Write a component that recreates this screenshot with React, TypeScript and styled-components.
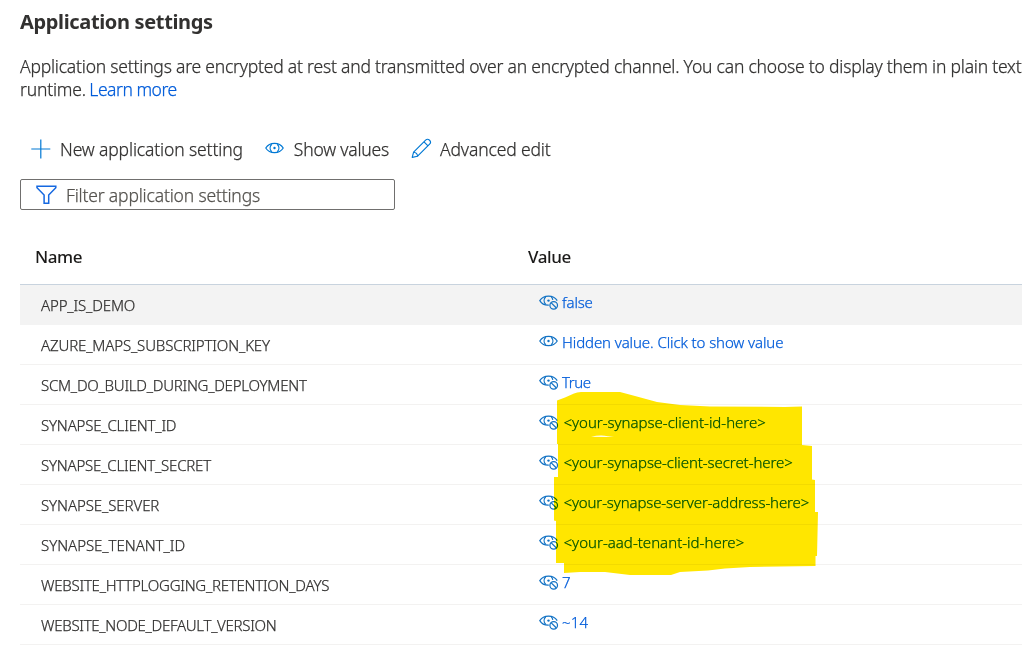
import React from "react";
import styled, { createGlobalStyle } from "styled-components";

const GlobalStyle = createGlobalStyle`
  * { box-sizing: border-box; }
  body {
    margin: 0;
    overflow: hidden;
    background: #fff;
    color: #323130;
    font-family: "Noto Sans", "Open Sans", sans-serif;
    font-weight: 300;
    -webkit-text-stroke: 0.25px currentColor;
  }
`;

const Page = styled.main`
  width: 1022px;
  height: 665px;
  padding: 8px 0 0 20px;
  overflow: hidden;
`;

const Title = styled.h1`
  margin: 0 0 19px;
  font-size: 20px;
  line-height: 28px;
  font-weight: 700;
  letter-spacing: -0.35px;
  -webkit-text-stroke-width: 0;
`;

const Description = styled.p`
  margin: 0;
  height: 46px;
  font-size: 17.5px;
  line-height: 23px;
  letter-spacing: -0.207px;
  white-space: nowrap;
`;

const Link = styled.a`
  margin-left: -0.7px;
  color: #015cda;
  letter-spacing: -0.48px;
`;

const Toolbar = styled.div`
  display: flex;
  align-items: center;
  height: 31px;
  margin: 32px 0 15px;
`;

const Command = styled.button<{ $offset: number; $gap: number; $spacing: number }>`
  display: flex;
  align-items: center;
  gap: ${(p) => p.$gap}px;
  height: 31px;
  margin: 0 0 0 ${(p) => p.$offset}px;
  padding: 0;
  border: 0;
  background: none;
  color: inherit;
  font: inherit;
  font-size: 17.5px;
  letter-spacing: ${(p) => p.$spacing}px;
  white-space: nowrap;
  svg { flex: none; }
`;

const FilterBox = styled.label`
  display: flex;
  align-items: center;
  gap: 9px;
  width: 375px;
  height: 31px;
  padding-left: 15px;
  border: 1px solid #706f6e;
  border-radius: 2px;
  color: #55534f;
  font-size: 17.5px;
  letter-spacing: -0.17px;
`;

const Table = styled.section`
  position: relative;
  margin-top: 19px;
`;

const HeaderRow = styled.div`
  display: grid;
  grid-template-columns: 493px 1fr;
  align-items: center;
  height: 56px;
  padding-left: 15px;
  border-bottom: 1px solid #c8d3de;
  color: #1b1a19;
  font-size: 17px;
  font-weight: 500;
  letter-spacing: -0.4px;
  -webkit-text-stroke-width: 0;
`;

const Row = styled.div<{ $active?: boolean }>`
  display: grid;
  grid-template-columns: 498px 1fr;
  height: 40px;
  padding-left: 21px;
  border-bottom: 1px solid ${(p) => (p.$active ? "#f3f3f3" : "#f3f2f1")};
  background: ${(p) => (p.$active ? "#f3f3f3" : "#fff")};
  font-size: 15px;
`;

const Name = styled.div<{ $spacing: number }>`
  line-height: 41px;
  letter-spacing: ${(p) => p.$spacing}px;
`;

const Value = styled.div<{ $spacing: number; $indent?: boolean }>`
  display: flex;
  gap: ${(p) => (p.$indent ? 4.5 : 3)}px;
  color: #015cda;
  line-height: 35px;
  letter-spacing: ${(p) => p.$spacing}px;
  svg { flex: none; margin-top: 9px; }
`;

const Highlight = styled.svg`
  position: absolute;
  left: 530px;
  top: 161px;
  mix-blend-mode: multiply;
  pointer-events: none;
`;

const PlusIcon = () => (
  <svg width="20" height="20" viewBox="0 0 20 20" fill="none" stroke="#0078d4" strokeWidth="1.2">
    <path d="M9.8 .5v19M.3 10h19" />
  </svg>
);

const EyeIcon = () => (
  <svg width="20" height="19" viewBox="0 0 20 19" fill="none" stroke="#1272c4" strokeWidth="1.25">
    <path d="M.8 7C4.6 .8 14.4 .8 18.2 7C14.4 13.2 4.6 13.2 .8 7Z" />
    <path d="M6.7 3.2C4.6 5.4 4.6 8.6 6.7 10.8M12.3 3.2C14.4 5.4 14.4 8.6 12.3 10.8" />
    <circle cx="9.5" cy="7" r="1.2" fill="#1272c4" stroke="none" />
  </svg>
);

const ToolbarEyeIcon = () => (
  <svg width="20" height="19" viewBox="0 0 20 19" fill="none" stroke="#0078d4" strokeWidth="1.25">
    <path d="M.8 9C4.6 2.8 14.4 2.8 18.2 9C14.4 15.2 4.6 15.2 .8 9Z" />
    <path d="M6.7 5.2C4.6 7.4 4.6 10.6 6.7 12.8M12.3 5.2C14.4 7.4 14.4 10.6 12.3 12.8" />
    <circle cx="9.5" cy="9" r="1.2" fill="#0078d4" stroke="none" />
  </svg>
);

const EyeOffIcon = () => (
  <svg width="20" height="19" viewBox="0 0 20 19" fill="none" stroke="#1272c4" strokeWidth="1.25">
    <path d="M9.8 11.2C6.2 11.4 2.7 9.8 .8 6.6C4.6 .6 14.4 .6 18.2 6.6" />
    <path d="M6.7 2.8C4.6 5 4.6 8.2 6.7 10.4M12.3 2.8C13.2 3.8 13.7 4.8 13.8 5.9" />
    <circle cx="9.5" cy="6.6" r="1.2" fill="#1272c4" stroke="none" />
    <circle cx="14.7" cy="11.3" r="3.8" />
    <path d="M12 8.6l5.4 5.4" />
  </svg>
);

const PencilIcon = () => (
  <svg width="21" height="21" viewBox="0 0 21 21" fill="none" stroke="#0078d4" strokeWidth="1.15" strokeLinejoin="round">
    <path d="M1.2 19.4L2.6 14.2L14.6 2.2C17.2 -.4 21.2 3.6 18.6 6.2L6.6 18.2Z" />
    <path d="M2.6 14.2C4.8 14.4 6.4 16 6.6 18.2M13 3.8L17 7.8" />
  </svg>
);

const FilterIcon = () => (
  <svg width="21" height="20" viewBox="0 0 21 20" fill="none" stroke="#1568e0" strokeWidth="1.5">
    <path d="M1 1.2H19.8V2.7L12.7 10V18.2H8.1V10L1 2.7Z" />
  </svg>
);

interface Setting {
  name: string;
  value: string;
  nameSpacing: number;
  valueSpacing: number;
  hidden?: boolean;
  indent?: boolean;
}

const settings: Setting[] = [
  { name: "APP_IS_DEMO", value: "false", nameSpacing: -0.14, valueSpacing: -0.15 },
  { name: "AZURE_MAPS_SUBSCRIPTION_KEY", value: "Hidden value. Click to show value", nameSpacing: -0.14, valueSpacing: -0.1, hidden: true },
  { name: "SCM_DO_BUILD_DURING_DEPLOYMENT", value: "True", nameSpacing: -0.25, valueSpacing: -0.45 },
  { name: "SYNAPSE_CLIENT_ID", value: "<your-synapse-client-id-here>", nameSpacing: -0.18, valueSpacing: -0.01, indent: true },
  { name: "SYNAPSE_CLIENT_SECRET", value: "<your-synapse-client-secret-here>", nameSpacing: -0.2, valueSpacing: -0.07, indent: true },
  { name: "SYNAPSE_SERVER", value: "<your-synapse-server-address-here>", nameSpacing: -0.08, valueSpacing: -0.13, indent: true },
  { name: "SYNAPSE_TENANT_ID", value: "<your-aad-tenant-id-here>", nameSpacing: -0.04, valueSpacing: 0.02, indent: true },
  { name: "WEBSITE_HTTPLOGGING_RETENTION_DAYS", value: "7", nameSpacing: -0.25, valueSpacing: 0 },
  { name: "WEBSITE_NODE_DEFAULT_VERSION", value: "~14", nameSpacing: -0.29, valueSpacing: 0.2 },
];

export default function App() {
  return (
    <Page>
      <GlobalStyle />
      <Title>Application settings</Title>
      <Description>
        Application settings are encrypted at rest and transmitted over an encrypted channel. You can choose to display them in plain text
        <br />
        runtime. <Link>Learn more</Link>
      </Description>
      <Toolbar>
        <Command $offset={11} $gap={9} $spacing={-0.13}><PlusIcon />New application setting</Command>
        <Command $offset={22} $gap={9} $spacing={-0.2}><ToolbarEyeIcon />Show values</Command>
        <Command $offset={22} $gap={8} $spacing={-0.13}><PencilIcon />Advanced edit</Command>
      </Toolbar>
      <FilterBox><FilterIcon />Filter application settings</FilterBox>
      <Table>
        <HeaderRow><span>Name</span><span>Value</span></HeaderRow>
        {settings.map((s, i) => (
          <Row key={s.name} $active={i === 0}>
            <Name $spacing={s.nameSpacing}>{s.name}</Name>
            <Value $spacing={s.valueSpacing} $indent={s.indent}>
              {s.hidden ? <EyeIcon /> : <EyeOffIcon />}
              <span>{s.value}</span>
            </Value>
          </Row>
        ))}
        <Highlight width="272" height="190" viewBox="550 390 272 190">
          <path
            fill="#ffe600"
            fillRule="evenodd"
            d="M557 400.5L565 397.5L574 393.5Q577 392 581 392H620L635 396L657 402L680 405L710 406.5L785 407L802 406.5V445L812 446V479.5L815 480V512H818L817 556H815.5V566L750 567L725 568.5L708 570.5L680 572L671 575H630L605 572L580 572L564 573V563H556V521L554 520.5V477H558V444H557ZM591 436.8Q600 434.6 608 436.2L614 437Z"
          />
        </Highlight>
      </Table>
    </Page>
  );
}
